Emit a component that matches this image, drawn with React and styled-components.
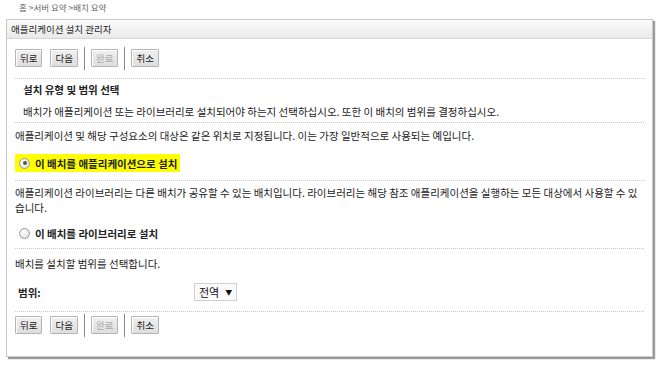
import React from 'react'
import styled, { createGlobalStyle } from 'styled-components'

const Global = createGlobalStyle`
  html, body {
    margin: 0;
    padding: 0;
    background: #fff;
  }
  body {
    font-family: "Noto Sans CJK KR", "Noto Sans", sans-serif;
    font-size: 10.5px;
    color: #222;
  }
`

const Page = styled.div`
  width: 660px;
  height: 365px;
  overflow: hidden;
`

const Breadcrumb = styled.div`
  height: 19px;
  padding-left: 19px;
  line-height: 14px;
  font-size: 8.5px;
  color: #666;
`

const Panel = styled.div`
  margin-left: 6px;
  width: 645px;
  height: 336px;
  border: 1px solid #c8c8c8;
  box-shadow: 2px 2px 1px #9a9a9a;
  background: #fff;
  display: flex;
  flex-direction: column;
`

const Header = styled.div`
  height: 18px;
  line-height: 18px;
  padding-left: 4px;
  font-size: 9.5px;
  color: #222;
  background: linear-gradient(#fbfbfb, #e9e9e9);
  border-bottom: 1px solid #d6d6d6;
`

const Body = styled.div`
  padding: 0 8px;
  display: flex;
  flex-direction: column;
`

const Toolbar = styled.div`
  display: flex;
  align-items: center;
  gap: 6px;
  height: 24px;
  padding-top: ${p => p.$top || 0}px;
  & > :nth-child(2) {
    margin-left: 2px;
  }
`

const Button = styled.button`
  font-family: inherit;
  font-size: 9.5px;
  height: 18px;
  padding: 0 4px;
  line-height: 14px;
  border: 1px solid #b5b5b5;
  border-radius: 1px;
  background: linear-gradient(#f0f0f0, #dedede);
  color: ${p => (p.disabled ? '#aaa' : '#222')};
  box-shadow: inset 1px 1px 0 #fff;
  cursor: pointer;
`

const Sep = styled.span`
  width: 1px;
  height: 23px;
  background: #8a8a8a;
`

const Rule = styled.div`
  border-top: 1px dotted #c8c8c8;
  margin-top: ${p => p.$top || 0}px;
`

const Line = styled.div`
  padding-left: ${p => p.$indent || 0}px;
  margin-top: ${p => p.$top || 0}px;
  line-height: 15px;
  font-weight: ${p => (p.$bold ? 700 : 400)};
`

const Para = styled.div`
  margin-top: ${p => p.$top || 0}px;
  line-height: 15px;
  width: 628px;
`

const Highlight = styled.label`
  align-self: flex-start;
  display: flex;
  align-items: center;
  gap: 5px;
  margin-top: ${p => p.$top || 0}px;
  height: 18px;
  padding: 0 3px 0 4px;
  background: ${p => (p.$on ? '#ffff00' : 'transparent')};
  font-weight: 700;
`

const Radio = styled.span`
  width: 9px;
  height: 9px;
  border-radius: 50%;
  border: 1px solid #9a9a9a;
  background: radial-gradient(circle at 40% 35%, #fff, #d8d8d8);
  display: flex;
  align-items: center;
  justify-content: center;
  &::after {
    content: '';
    width: 4px;
    height: 4px;
    border-radius: 50%;
    background: ${p => (p.$checked ? '#555' : 'transparent')};
  }
`

const ScopeRow = styled.div`
  display: flex;
  align-items: center;
  margin-top: ${p => p.$top || 0}px;
  height: 18px;
`

const ScopeLabel = styled.span`
  width: 176px;
  padding-left: 3px;
  font-weight: 700;
`

const Select = styled.span`
  display: inline-flex;
  align-items: center;
  gap: 6px;
  height: 16px;
  padding: 0 4px;
  border: 1px solid #d0d0d0;
  background: #fafafa;
  font-size: 11px;
  color: #111;
  &::after {
    content: '▼';
    font-size: 7px;
  }
`

function Buttons({ top }) {
  return (
    <Toolbar $top={top}>
      <Button>뒤로</Button>
      <Button>다음</Button>
      <Sep />
      <Button disabled>완료</Button>
      <Sep />
      <Button>취소</Button>
    </Toolbar>
  )
}

export default function App() {
  return (
    <Page>
      <Global />
      <Breadcrumb>홈 &gt;서버 요약 &gt;배치 요약</Breadcrumb>
      <Panel>
        <Header>애플리케이션 설치 관리자</Header>
        <Body>
          <Buttons top={7} />
          <Rule $top={8} />
          <Line $indent={8} $bold $top={3}>설치 유형 및 범위 선택</Line>
          <Line $indent={8} $top={7}>
            배치가 애플리케이션 또는 라이브러리로 설치되어야 하는지 선택하십시오. 또한 이 배치의 범위를 결정하십시오.
          </Line>
          <Rule $top={3} />
          <Line $top={5}>
            애플리케이션 및 해당 구성요소의 대상은 같은 위치로 지정됩니다. 이는 가장 일반적으로 사용되는 예입니다.
          </Line>
          <Highlight $on $top={11}>
            <Radio $checked />이 배치를 애플리케이션으로 설치
          </Highlight>
          <Rule $top={8} />
          <Para $top={4}>
            애플리케이션 라이브러리는 다른 배치가 공유할 수 있는 배치입니다. 라이브러리는 해당 참조 애플리케이션을 실행하는 모든 대상에서 사용할 수 있습니다.
          </Para>
          <Highlight $top={9}>
            <Radio />이 배치를 라이브러리로 설치
          </Highlight>
          <Rule $top={6} />
          <Line $top={7}>배치를 설치할 범위를 선택합니다.</Line>
          <ScopeRow $top={12}>
            <ScopeLabel>범위:</ScopeLabel>
            <Select>전역</Select>
          </ScopeRow>
          <Rule $top={10} />
          <Buttons top={1} />
        </Body>
      </Panel>
    </Page>
  )
}
